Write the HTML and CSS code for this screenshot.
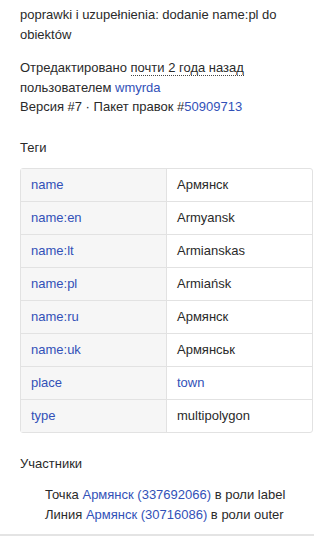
FILE: index.html
```html
<!DOCTYPE html>
<html lang="ru">
  <head>
    <meta charset="UTF-8" />
    <meta name="viewport" content="width=device-width, initial-scale=1.0" />
    <title>Отношение</title>
    <link rel="stylesheet" href="styles.css">
  </head>
  <body>
    <div class="sidebar">
      <p class="comment">poprawki i uzupełnienia: dodanie name:pl do obiektów</p>

      <p class="meta">
        Отредактировано <span class="ago">почти 2 года назад</span><br>
        пользователем <a href="#">wmyrda</a><br>
        Версия #7 · Пакет правок #<a href="#">50909713</a>
      </p>

      <h4 class="tags-title">Теги</h4>
      <table class="tags">
        <tr><th><a href="#">name</a></th><td>Армянск</td></tr>
        <tr><th><a href="#">name:en</a></th><td>Armyansk</td></tr>
        <tr><th><a href="#">name:lt</a></th><td>Armianskas</td></tr>
        <tr><th><a href="#">name:pl</a></th><td>Armiańsk</td></tr>
        <tr><th><a href="#">name:ru</a></th><td>Армянск</td></tr>
        <tr><th><a href="#">name:uk</a></th><td>Армянськ</td></tr>
        <tr><th><a href="#">place</a></th><td><a href="#">town</a></td></tr>
        <tr><th><a href="#">type</a></th><td>multipolygon</td></tr>
      </table>

      <h4>Участники</h4>
      <ul class="members">
        <li>Точка <a href="#">Армянск (337692066)</a> в роли label</li>
        <li>Линия <a href="#">Армянск (30716086)</a> в роли outer</li>
      </ul>
    </div>
  </body>
</html>
```

FILE: styles.css
```css
* {
  margin: 0;
  padding: 0;
  list-style: none;
}
body {
  font-family: "Liberation Sans", Arial, sans-serif;
  font-size: 13px;
  color: #2a2a2a;
  background: #fff;
}
a {
  color: #3251b8;
  text-decoration: none;
}
.sidebar {
  padding: 5px 0 0 20px;
  height: 529px;
  border-bottom: 2px solid #e4e4e4;
}
.comment {
  line-height: 20px;
  width: 280px;
}
.meta {
  margin-top: 13px;
  line-height: 19.5px;
}
.ago {
  border-bottom: 1px dotted #444;
}
h4 {
  font-size: 13px;
  font-weight: normal;
  margin-top: 21px;
  line-height: 20px;
}
.tags-title {
  margin-top: 21px;
}
/* таблица тегов */
.tags {
  margin-top: 10px;
  width: 293px;
  border-collapse: separate;
  border-spacing: 0;
  border: 1px solid #e2e2e2;
  border-radius: 3px;
}
.tags th,
.tags td {
  height: 32px;
  padding: 0 10px;
  text-align: left;
  font-weight: normal;
  border-top: 1px solid #e2e2e2;
}
.tags tr:first-child th,
.tags tr:first-child td {
  border-top: none;
}
.tags th {
  width: 125px;
  background: #f6f6f6;
  border-right: 1px solid #e2e2e2;
}
.members {
  margin-top: 11px;
  padding-left: 25px;
  line-height: 20px;
}
```
